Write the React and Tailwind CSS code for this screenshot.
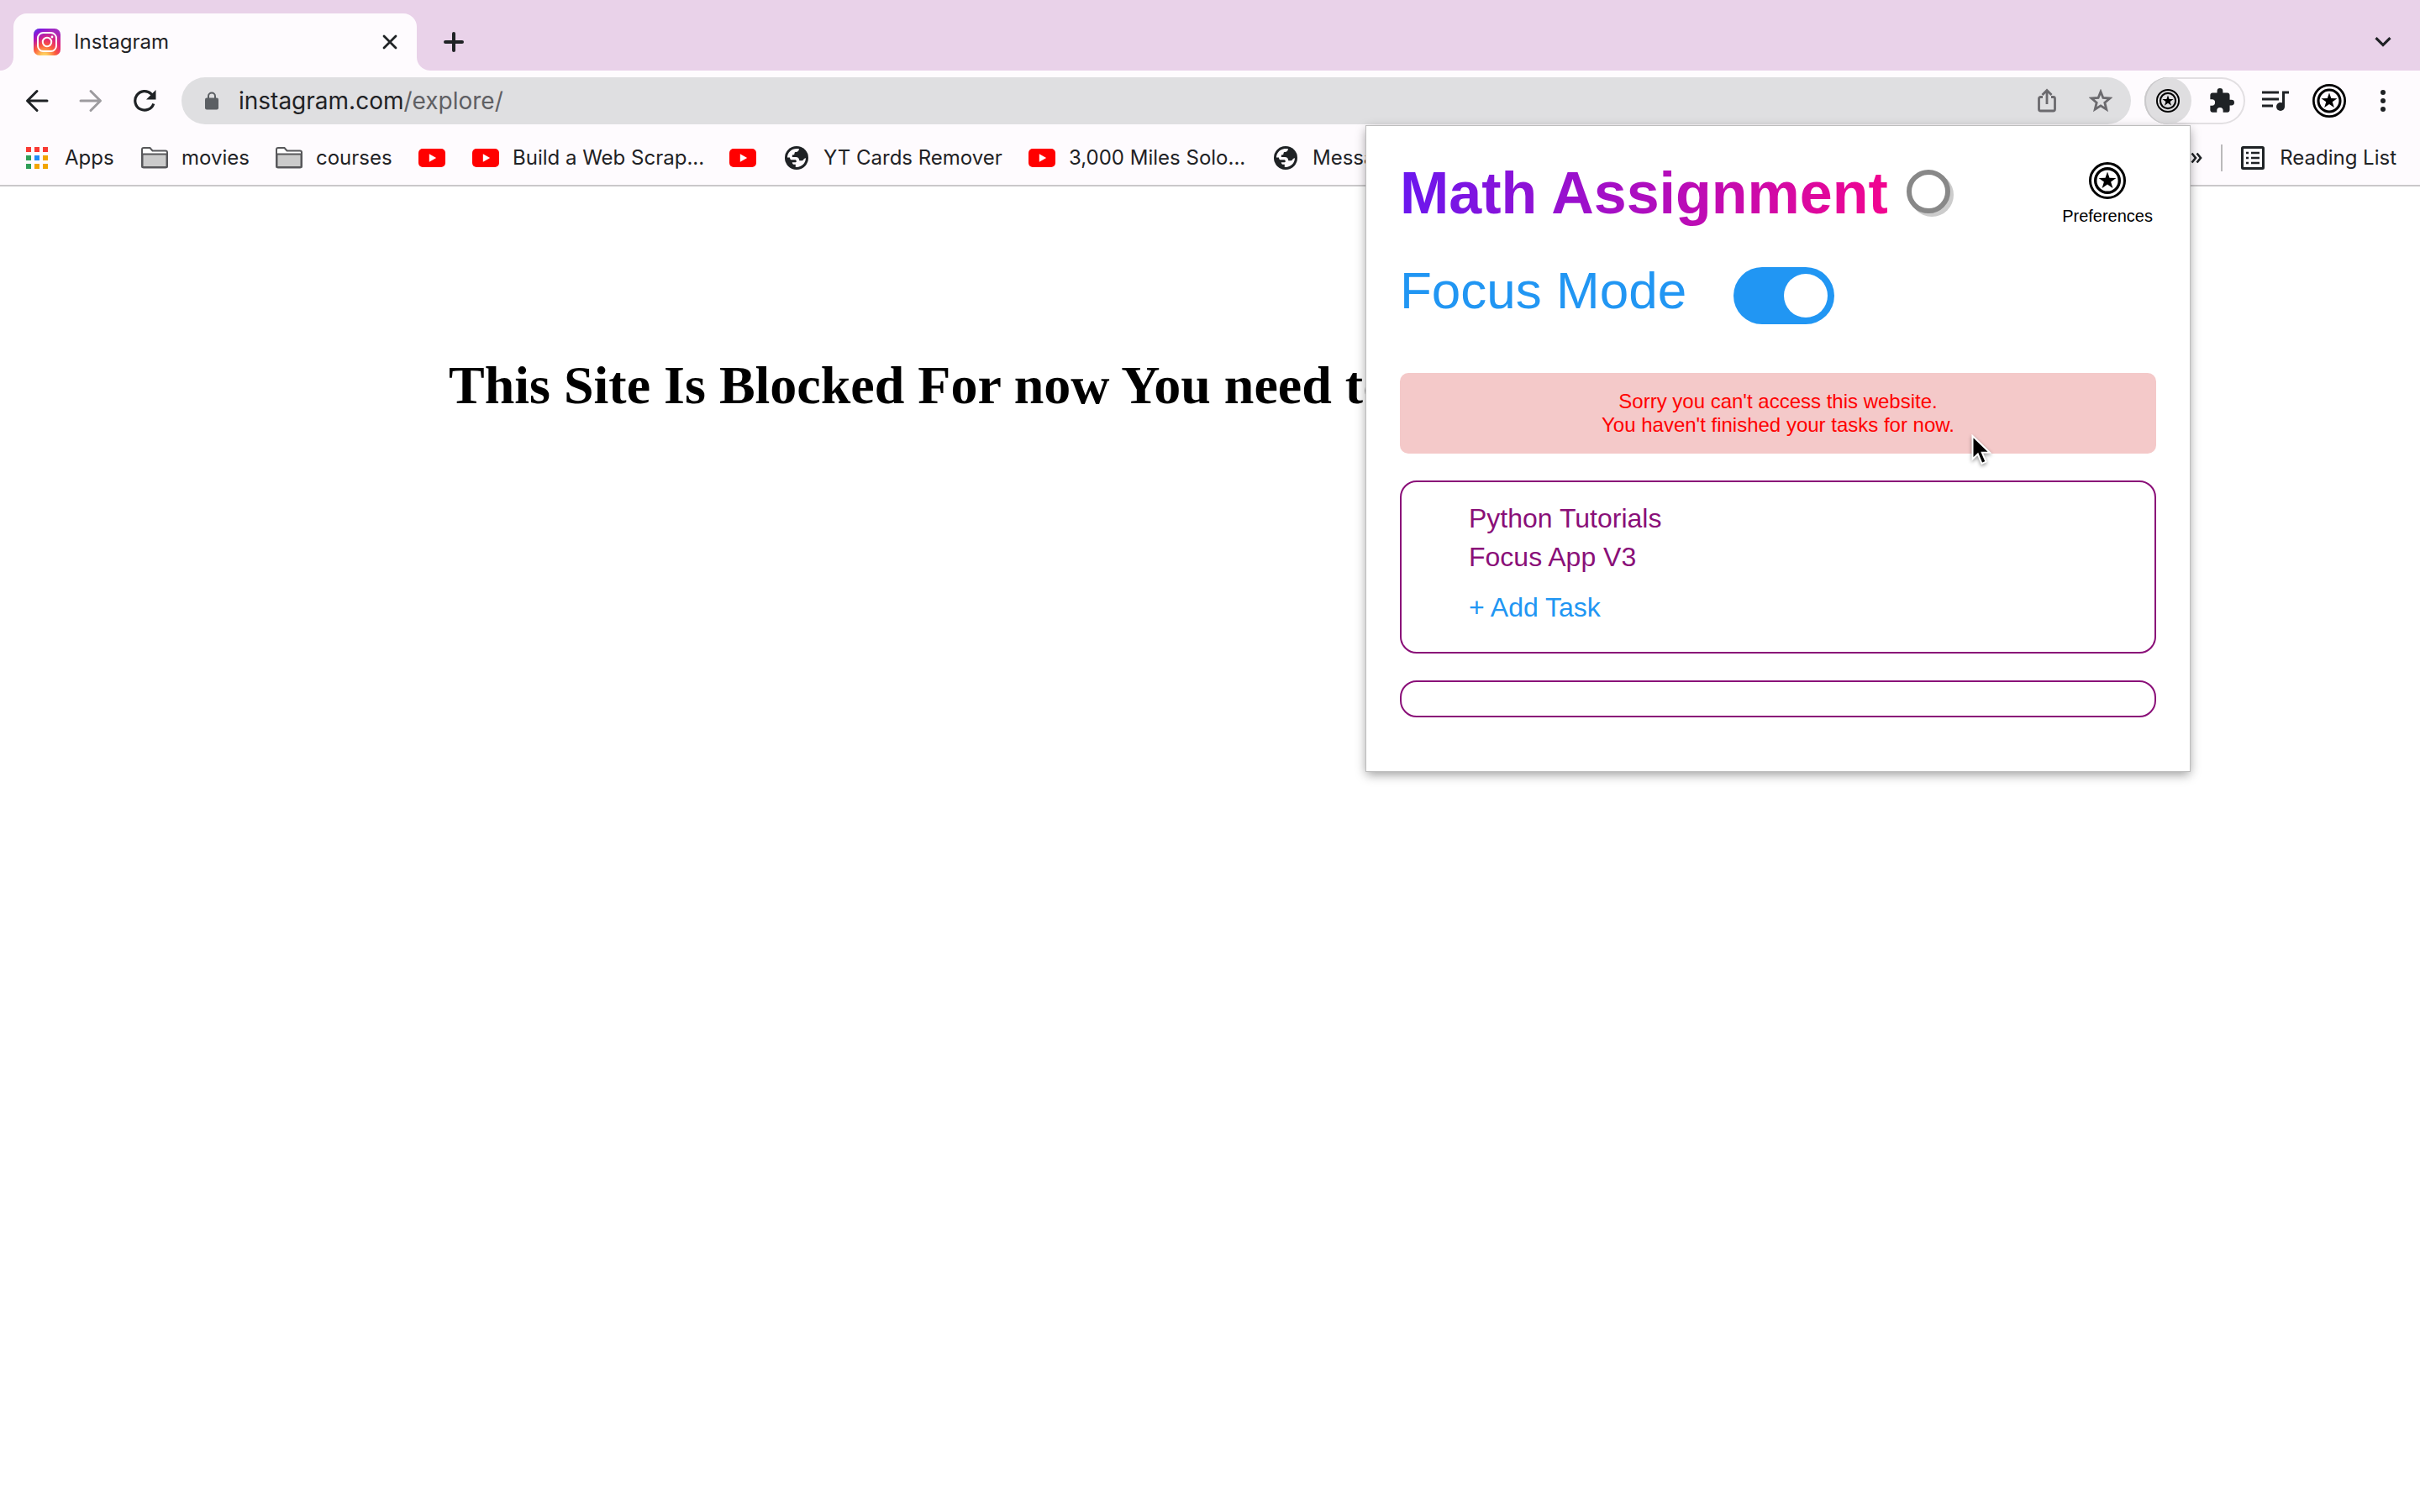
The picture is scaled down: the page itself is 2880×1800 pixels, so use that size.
import React from "react";

const ink = "#1f2225";

function Shield({ className }) {
  return (
    <svg viewBox="0 0 44 44" className={className} fill="none" stroke="#000" aria-hidden="true">
      <circle cx="22" cy="22" r="20.5" strokeWidth="3" />
      <circle cx="22" cy="22" r="14.3" strokeWidth="3.4" />
      <path
        fill="#000"
        stroke="none"
        d="M22 11.600l2.500 7.200 7.900.1-6.300 4.600 2.300 7.400-6.400-4.400-6.400 4.400 2.300-7.400-6.300-4.600 7.900-.1z"
      />
    </svg>
  );
}

function InstagramLogo() {
  return (
    <svg viewBox="0 0 32 32" className="size-8 shrink-0" aria-hidden="true">
      <defs>
        <radialGradient id="igWarm" cx="0.4" cy="1.07" r="1.05">
          <stop offset="0" stopColor="#ffe07a" />
          <stop offset="0.15" stopColor="#ffc65a" />
          <stop offset="0.42" stopColor="#fb5a3c" />
          <stop offset="0.68" stopColor="#e0257a" />
          <stop offset="1" stopColor="#a32bc0" />
        </radialGradient>
        <linearGradient id="igCool" x1="0" y1="0" x2="0.4" y2="0.4">
          <stop offset="0" stopColor="#3771d8" />
          <stop offset="0.4" stopColor="#60f" stopOpacity="0.5" />
          <stop offset="1" stopColor="#60f" stopOpacity="0" />
        </linearGradient>
      </defs>
      <rect width="32" height="32" rx="7" fill="url(#igWarm)" />
      <rect width="32" height="32" rx="7" fill="url(#igCool)" />
      <rect x="5" y="5" width="22" height="22" rx="6.5" fill="none" stroke="#fff" strokeWidth="2" />
      <circle cx="16" cy="16" r="5.2" fill="none" stroke="#fff" strokeWidth="2" />
      <circle cx="22" cy="10" r="1.4" fill="#fff" />
    </svg>
  );
}

function AppsIcon() {
  const colors = ["#f93a34", "#f93a34", "#f93a34", "#2f9e57", "#1f8bf5", "#f2a500", "#2f9e57", "#f2a500", "#f2a500"];
  return (
    <svg viewBox="0 0 26 26" className="size-[26px] shrink-0" aria-hidden="true">
      {colors.map((c, i) => (
        <rect key={i} x={(i % 3) * 10} y={Math.floor(i / 3) * 10} width="6" height="6" fill={c} />
      ))}
    </svg>
  );
}

function FolderIcon() {
  return (
    <svg viewBox="0 0 32 26" className="h-[26px] w-8 shrink-0" aria-hidden="true">
      <path d="M1 22.500V3a2 2 0 0 1 2-2h7.500l3 3.500H29a2 2 0 0 1 2 2v16a2 2 0 0 1-2 2H3a2 2 0 0 1-2-2z" fill="#fff" stroke="#57575a" strokeWidth="2" />
      <path d="M1.500 8.500h29V24H1.500z" fill="#cbcbcb" stroke="#57575a" strokeWidth="2" strokeLinejoin="round" />
    </svg>
  );
}

function YouTubeIcon() {
  return (
    <svg viewBox="0 0 32 22" className="h-[22px] w-8 shrink-0" aria-hidden="true">
      <rect width="32" height="22" rx="5" fill="#f00" />
      <path d="M12.800 6.300v9.400l8.300-4.700z" fill="#fff" />
    </svg>
  );
}

function GlobeIcon() {
  return (
    <span className="flex w-8 shrink-0 justify-center">
      <svg viewBox="0 0 28 28" className="size-7" aria-hidden="true">
        <circle cx="14" cy="14" r="14" fill={ink} />
        <path
          fill="#fefbfe"
          d="M3 13.500C3 8 7.500 3 14.500 3c1 0 1.600.1 2.500.3C16.500 6 15.500 7 13 7c-1 0-1.500.7-1.500 1.700 0 1-.6 1.500-1.700 1.500-.8 0-1 .6-1 1.300V13H13c2.600 0 4.300 1.600 4.300 4.200h3c1.500 0 1.800-1.200 2.500-1.900.6-.6 1.300-1 2.200-1C24.800 20 20.200 25 14 25c-.4 0-.8 0-1.200-.1v-3.100h-1.300c-1.600 0-2.700-1-2.700-2.600h4c.8 0 1-.5 1-1.200 0-1.100-.7-1.700-1.800-1.700H8.500C7 16.300 6 15.500 6 13.500z"
        />
      </svg>
    </span>
  );
}

const bookmarks = [
  { icon: FolderIcon, label: "movies", w: "w-[160px]" },
  { icon: FolderIcon, label: "courses", w: "w-[170px]" },
  { icon: YouTubeIcon, label: "", w: "w-[64px]" },
  { icon: YouTubeIcon, label: "Build a Web Scrap...", w: "w-[306px]" },
  { icon: YouTubeIcon, label: "", w: "w-[64px]" },
  { icon: GlobeIcon, label: "YT Cards Remover", w: "w-[292px]" },
  { icon: YouTubeIcon, label: "3,000 Miles Solo...", w: "w-[290px]" },
  { icon: GlobeIcon, label: "Messages", w: "w-[220px]" },
];

function TabStrip() {
  return (
    <header className="flex h-[84px] items-end bg-[#e9d2e9]">
      <div className="relative ml-4 flex h-[68px] w-[480px] items-center rounded-t-2xl bg-[#fefbfe] pr-4 pl-6">
        <svg viewBox="0 0 16 16" className="absolute bottom-0 -left-4 size-4" aria-hidden="true">
          <path d="M16 0v16H0A16 16 0 0 0 16 0z" fill="#fefbfe" />
        </svg>
        <svg viewBox="0 0 16 16" className="absolute -right-4 bottom-0 size-4" aria-hidden="true">
          <path d="M0 0v16h16A16 16 0 0 1 0 0z" fill="#fefbfe" />
        </svg>
        <InstagramLogo />
        <span className="ml-4 flex-1 text-2xl">Instagram</span>
        <button aria-label="Close tab" className="p-1">
          <svg viewBox="0 0 24 24" className="size-6" stroke={ink} strokeWidth="2.800" strokeLinecap="round" aria-hidden="true">
            <path d="M5 5l14 14M19 5l-14 14" />
          </svg>
        </button>
      </div>
      <button aria-label="New tab" className="ml-8 flex h-[68px] items-center">
        <svg viewBox="0 0 24 24" className="size-6" stroke={ink} strokeWidth="4" strokeLinecap="round" aria-hidden="true">
          <path d="M12 2v20M2 12h20" />
        </svg>
      </button>
      <button aria-label="Search tabs" className="mr-[34px] ml-auto flex h-[68px] items-center">
        <svg viewBox="0 0 20 12" className="h-3 w-5" fill="none" stroke={ink} strokeWidth="3.200" aria-hidden="true">
          <path d="M1.500 1.200L10 9.600l8.500-8.400" />
        </svg>
      </button>
    </header>
  );
}

function Toolbar() {
  return (
    <nav className="flex h-[72px] items-center bg-[#fefbfe] pr-10 pl-[30px]">
      <button aria-label="Back">
        <svg viewBox="0 0 28 28" className="size-7" fill="none" stroke={ink} strokeWidth="3" strokeLinecap="round" strokeLinejoin="round" aria-hidden="true">
          <path d="M26 14H3M14 2.500L2.500 14 14 25.500" />
        </svg>
      </button>
      <button aria-label="Forward" className="ml-9">
        <svg viewBox="0 0 28 28" className="size-7" fill="none" stroke="#9d9b9f" strokeWidth="3" strokeLinecap="round" strokeLinejoin="round" aria-hidden="true">
          <path d="M2 14h23M14 2.500L25.500 14 14 25.500" />
        </svg>
      </button>
      <button aria-label="Reload" className="ml-9">
        <svg viewBox="0 0 28 28" className="size-7" fill="none" stroke={ink} strokeWidth="3.200" aria-hidden="true">
          <path d="M24.800 17.500A11.300 11.300 0 1 1 22 5.800l2 2" />
          <path d="M27.500 1v11.500H16z" fill={ink} stroke="none" />
        </svg>
      </button>
      <div className="ml-[30px] flex h-14 flex-1 items-center rounded-full bg-[#dfdfe1] pr-[22px] pl-7">
        <svg viewBox="0 0 16 22" className="h-[22px] w-4 shrink-0" aria-hidden="true">
          <path d="M4 9V5.500a4 4 0 0 1 8 0V9" fill="none" stroke="#5b5f63" strokeWidth="2" />
          <rect y="7.500" width="16" height="14" rx="2" fill="#5b5f63" />
        </svg>
        <a href="#explore" className="ml-6 flex-1 text-[28px] leading-9 text-[#5f6064]">
          <span className="text-[#1f2225]">instagram.com</span>/explore/
        </a>
        <button aria-label="Share">
          <svg viewBox="0 0 24 30" className="h-[30px] w-6" fill="none" stroke="#6b6a6e" strokeWidth="2.800" aria-hidden="true">
            <path d="M7 10.500H4.500a2 2 0 0 0-2 2V25a2 2 0 0 0 2 2h15a2 2 0 0 0 2-2V12.500a2 2 0 0 0-2-2H17M12 19V3M6.500 8L12 2.500 17.500 8" />
          </svg>
        </button>
        <button aria-label="Bookmark this page" className="ml-[38px]">
          <svg viewBox="0 0 28 28" className="size-7" fill="none" stroke="#6b6a6e" strokeWidth="2.800" aria-hidden="true">
            <path d="M14 3.200l2.900 7.200 8.100.6-6.200 5.200 2 7.900-6.800-4.300-6.800 4.300 2-7.900L3 11l8.100-.6z" />
          </svg>
        </button>
      </div>
      <div className="ml-4 flex h-14 w-[120px] items-center rounded-full shadow-[inset_0_0_0_2px_#e2dfe2]">
        <button aria-label="Focus extension" className="flex size-14 items-center justify-center rounded-full bg-[#dfdee0] shadow-[inset_2px_0_0_#cac9cb]">
          <Shield className="size-7" />
        </button>
        <button aria-label="Extensions" className="ml-[21px]">
          <svg viewBox="1 1 22 22" className="size-[30px]" fill={ink} aria-hidden="true">
            <path d="M20.500 11H19V7c0-1.100-.900-2-2-2h-4V3.500a2.500 2.500 0 0 0-5 0V5H4c-1.100 0-2 .900-2 2v3.800h1.500a2.700 2.700 0 0 1 0 5.400H2V20c0 1.100.900 2 2 2h3.800v-1.500a2.700 2.700 0 0 1 5.400 0V22H17c1.100 0 2-.900 2-2v-4h1.500a2.500 2.500 0 0 0 0-5z" />
          </svg>
        </button>
      </div>
      <button aria-label="Media controls" className="ml-5">
        <svg viewBox="0 0 32 26" className="h-[26px] w-8" fill="none" stroke={ink} strokeWidth="3" aria-hidden="true">
          <path d="M0 3h20M0 11h20M0 19h13M25.500 20V3H32" />
          <circle cx="22" cy="20" r="5" fill={ink} stroke="none" />
        </svg>
      </button>
      <button aria-label="Profile" className="ml-7">
        <Shield className="size-10" />
      </button>
      <button aria-label="Browser menu" className="ml-10">
        <svg viewBox="0 0 8 26" className="h-[26px] w-2" fill={ink} aria-hidden="true">
          <circle cx="4" cy="3" r="3" />
          <circle cx="4" cy="13" r="3" />
          <circle cx="4" cy="23" r="3" />
        </svg>
      </button>
    </nav>
  );
}

function BookmarksBar() {
  return (
    <nav aria-label="Bookmarks" className="flex h-[66px] items-center border-b-2 border-[#cac8ca] bg-[#fefbfe] pr-7 pl-[31px] text-2xl">
      <a href="#apps" className="flex w-[137px] shrink-0 items-center gap-5">
        <AppsIcon />
        Apps
      </a>
      <div className="flex min-w-0 flex-1 overflow-hidden">
        {bookmarks.map(({ icon: Icon, label, w }, i) => (
          <a key={i} href="#bookmark" aria-label={label || "YouTube"} className={`flex shrink-0 items-center gap-4 whitespace-nowrap ${w}`}>
            <Icon />
            {label}
          </a>
        ))}
      </div>
      <button aria-label="More bookmarks">
        <svg viewBox="0 0 14 14" className="size-3.5" fill="none" stroke={ink} strokeWidth="2.600" aria-hidden="true">
          <path d="M1.500 1.500L6 7l-4.500 5.500M7.500 1.500L12 7l-4.500 5.500" />
        </svg>
      </button>
      <div className="ml-[22px] h-8 w-0.5 bg-[#bbb9bb]" />
      <button className="ml-[22px] flex items-center gap-[18px]">
        <svg viewBox="0 0 28 28" className="size-7" fill="none" stroke={ink} aria-hidden="true">
          <rect x="1.500" y="1.500" width="25" height="25" rx="1" strokeWidth="3" />
          <path strokeWidth="2.600" d="M6 8h3M12 8h10M6 14h3M12 14h10M6 20h3M12 20h10" />
        </svg>
        Reading List
      </button>
    </nav>
  );
}

function Popup() {
  return (
    <section
      aria-label="Focus extension"
      className="absolute top-[150px] right-[274px] w-[980px] bg-white px-10 pt-10 pb-16 font-['Liberation_Sans',Arial,sans-serif] shadow-[0_0_0_1px_#bdbdbd,0_4px_12px_rgba(0,0,0,0.4)]"
    >
      <div className="flex items-start justify-between">
        <label className="flex items-start gap-[22px]">
          <span className="bg-linear-to-r/srgb from-[#6a17ef] to-[#f2058f] bg-clip-text text-[70px] leading-[80px] font-bold text-transparent">
            Math Assignment
          </span>
          <input
            type="checkbox"
            className="mt-3 size-[52px] appearance-none rounded-full border-6 border-[#888] bg-white shadow-[4px_4px_0_#ccc]"
          />
        </label>
        <button className="mr-1 flex flex-col items-center gap-2 pt-[3px] text-xl leading-6 text-black">
          <Shield className="size-11" />
          Preferences
        </button>
      </div>
      <label className="mt-10 flex items-start gap-14 text-[62px] leading-[72px] text-[#2196f3]">
        Focus Mode
        <span className="relative mt-2 flex h-[68px] w-[120px]">
          <input type="checkbox" defaultChecked className="peer h-full w-full appearance-none rounded-full bg-[#ccc] checked:bg-[#2196f3]" />
          <span className="pointer-events-none absolute top-2 left-2 size-[52px] rounded-full bg-white peer-checked:left-[60px]" />
        </span>
      </label>
      <p className="mt-[58px] rounded-[10px] bg-[#f4c9c9] py-5 text-center text-2xl leading-7 text-[#f00]">
        Sorry you can't access this website.
        <br />
        You haven't finished your tasks for now.
      </p>
      <div className="mt-8 rounded-[20px] border-2 border-[#8a0f78] px-20 pt-5 pb-8 text-[32px] text-[#8a0f78]">
        <ul className="leading-[46px]">
          <li>Python Tutorials</li>
          <li>Focus App V3</li>
        </ul>
        <button className="mt-4 block leading-[42px] text-[#2196f3]">+ Add Task</button>
      </div>
      <div className="mt-8 h-11 rounded-[20px] border-2 border-[#8a0f78]" />
    </section>
  );
}

export default function App() {
  return (
    <div className="relative min-h-screen bg-white font-[Inter,sans-serif] text-[#1f2225]">
      <TabStrip />
      <Toolbar />
      <BookmarksBar />
      <main className="pt-[200px] pl-[534px]">
        <h1 className="font-['Liberation_Serif',serif] text-[64px] leading-[74px] font-bold whitespace-nowrap text-black">
          This Site Is Blocked For now You need to
        </h1>
      </main>
      <Popup />
      <svg viewBox="0 0 24 38" className="pointer-events-none absolute top-[517px] right-[510px] h-[38px] w-6 drop-shadow-[0_2px_2px_rgba(0,0,0,0.4)]" aria-hidden="true">
        <path d="M1.500 2v27.500l6.300-6 4.700 11.300 5-2.200-4.700-10.800H22z" fill="#000" stroke="#fff" strokeWidth="2" />
      </svg>
    </div>
  );
}
